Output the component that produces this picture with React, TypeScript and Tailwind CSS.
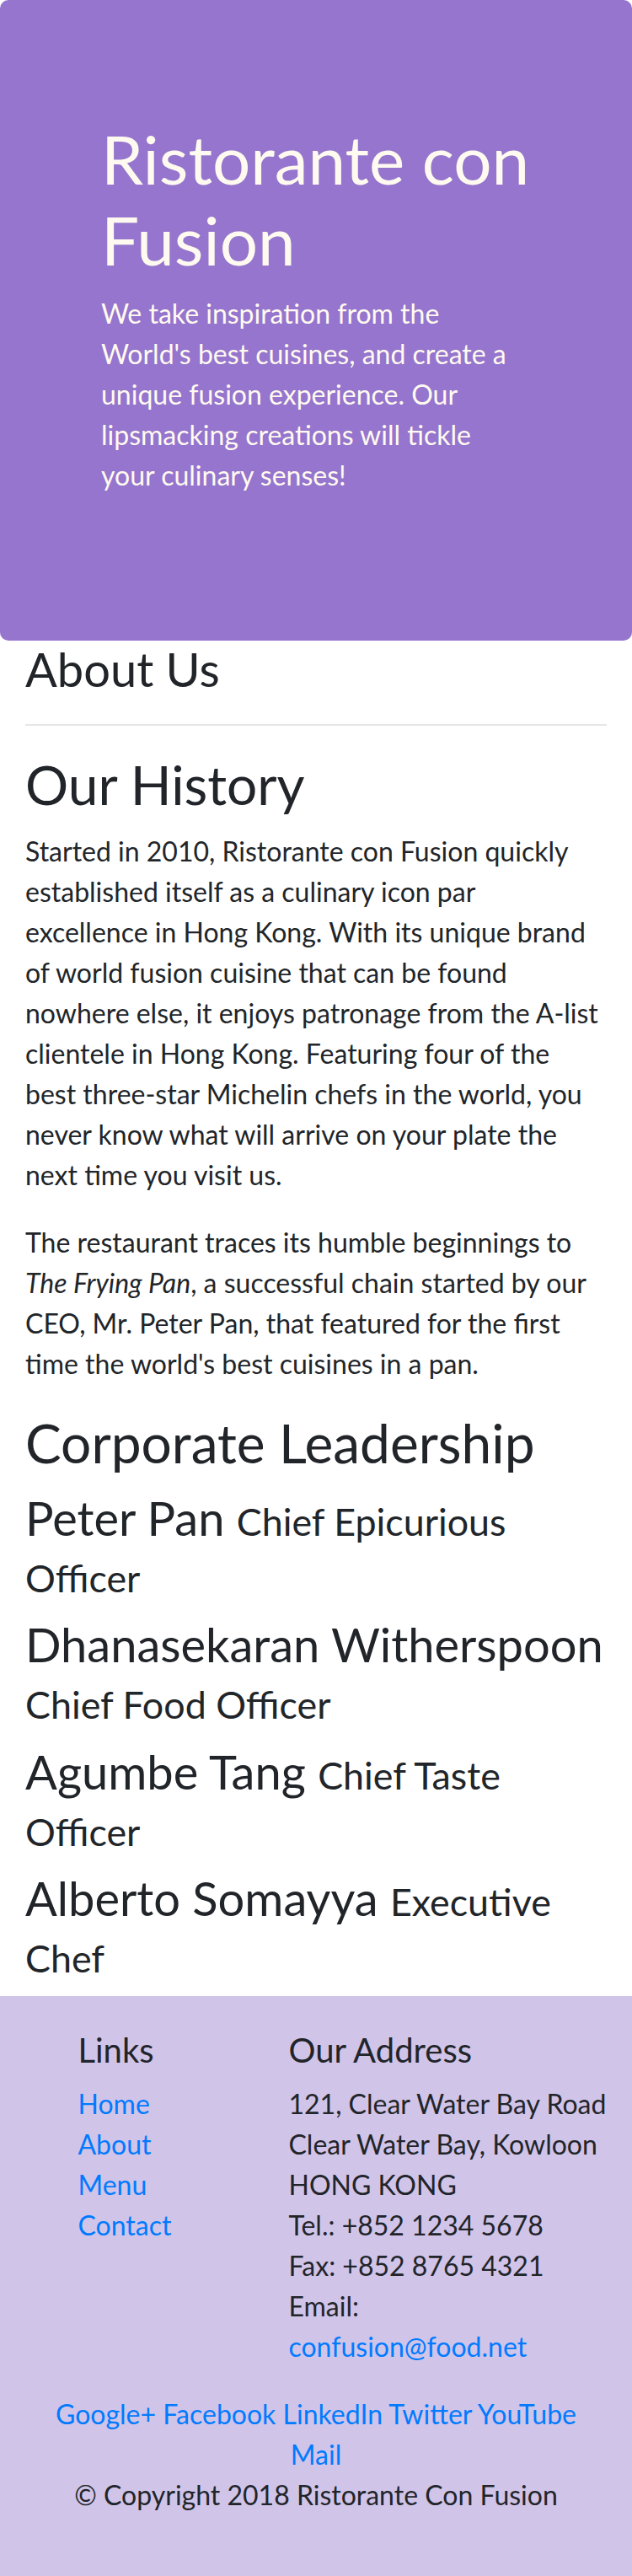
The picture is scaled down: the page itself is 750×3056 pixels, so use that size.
const leaders = [
  { name: 'Peter Pan', title: ['Chief Epicurious', 'Officer'] },
  { name: 'Dhanasekaran Witherspoon', title: ['', 'Chief Food Officer'] },
  { name: 'Agumbe Tang', title: ['Chief Taste', 'Officer'] },
  { name: 'Alberto Somayya', title: ['Executive', 'Chef'] },
]

const links = ['Home', 'About', 'Menu', 'Contact']
const social = ['Google+', 'Facebook', 'LinkedIn', 'Twitter', 'YouTube']

export default function App() {
  return (
    <div className="font-['Lato','Open_Sans',sans-serif] text-[32px] leading-[1.5] text-[#212529] bg-white">
      {/* jumbotron */}
      <header className="rounded-[10px] bg-[#9575CD] px-[120px] py-[140px] text-[#FFFAF0]">
        <h1 className="mb-[16px] text-[80px] leading-[1.2] whitespace-nowrap">
          Ristorante con
          <br />
          Fusion
        </h1>
        <p className="mb-[32px] whitespace-nowrap">
          We take inspiration from the
          <br />
          World's best cuisines, and create a
          <br />
          unique fusion experience. Our
          <br />
          lipsmacking creations will tickle
          <br />
          your culinary senses!
        </p>
      </header>

      <main className="px-[30px]">
        <h3 className="text-[56px] leading-[1.2]">About Us</h3>
        <hr className="my-[32px] border-0 border-t-2 border-[#e6e6e6]" />

        <h2 className="mb-[16px] text-[64px] leading-[1.2]">Our History</h2>
        <p className="mb-[32px] whitespace-nowrap">
          Started in 2010, Ristorante con Fusion quickly
          <br />
          established itself as a culinary icon par
          <br />
          excellence in Hong Kong. With its unique brand
          <br />
          of world fusion cuisine that can be found
          <br />
          nowhere else, it enjoys patronage from the A-list
          <br />
          clientele in Hong Kong. Featuring four of the
          <br />
          best three-star Michelin chefs in the world, you
          <br />
          never know what will arrive on your plate the
          <br />
          next time you visit us.
        </p>
        <p className="mb-[32px] whitespace-nowrap">
          The restaurant traces its humble beginnings to
          <br />
          <em>The Frying Pan</em>, a successful chain started by our
          <br />
          CEO, Mr. Peter Pan, that featured for the first
          <br />
          time the world's best cuisines in a pan.
        </p>

        <h2 className="mb-[16px] text-[64px] leading-[1.2]">Corporate Leadership</h2>
        {leaders.map((l) => (
          <h3 key={l.name} className="mb-[16px] text-[56px] leading-[1.2] whitespace-nowrap">
            {l.name}{' '}
            <small className="text-[80%]">
              {l.title[0]}
              <br />
              {l.title[1]}
            </small>
          </h3>
        ))}
      </main>

      <footer className="bg-[#D1C4E9] py-[40px]">
        <div className="flex flex-wrap">
          <div className="ml-[8.3333%] w-1/3 px-[30px]">
            <h5 className="mb-[16px] text-[40px] leading-[1.2]">Links</h5>
            <ul className="mb-[32px]">
              {links.map((t) => (
                <li key={t}>
                  <a href="#" className="text-[#007bff]">
                    {t}
                  </a>
                </li>
              ))}
            </ul>
          </div>
          <div className="w-7/12 px-[30px]">
            <h5 className="mb-[16px] text-[40px] leading-[1.2]">Our Address</h5>
            <address className="mb-[32px] not-italic whitespace-nowrap">
              121, Clear Water Bay Road
              <br />
              Clear Water Bay, Kowloon
              <br />
              HONG KONG
              <br />
              Tel.: +852 1234 5678
              <br />
              Fax: +852 8765 4321
              <br />
              Email:
              <br />
              <a href="#" className="text-[#007bff]">
                confusion@food.net
              </a>
            </address>
          </div>
          <div className="w-full px-[30px] text-center whitespace-nowrap">
            {social.map((s, i) => (
              <span key={s}>
                {i > 0 && ' '}
                <a href="#" className="text-[#007bff]">
                  {s}
                </a>
              </span>
            ))}
            <br />
            <a href="#" className="text-[#007bff]">
              Mail
            </a>
          </div>
          <div className="w-full px-[30px] text-center">
            <p className="mb-[32px]">© Copyright 2018 Ristorante Con Fusion</p>
          </div>
        </div>
      </footer>
    </div>
  )
}
